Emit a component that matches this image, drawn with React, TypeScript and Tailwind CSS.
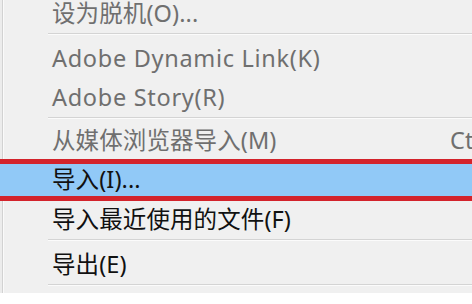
import React from "react";

const font = {
  fontFamily: '"Noto Sans", "Noto Sans CJK SC", sans-serif',
};

function Sep() {
  return (
    <div className="h-[6px] shrink-0 pl-[48px]">
      <div className="h-px bg-[#d4d4d4]" />
      <div className="h-px bg-[#fbfbfb]" />
    </div>
  );
}

function Item({
  label,
  muted,
  h,
  shortcut,
  wide,
}: {
  label: string;
  muted?: boolean;
  h: string;
  shortcut?: string;
  wide?: boolean;
}) {
  return (
    <div
      className={`flex shrink-0 items-center pl-[52px] text-[23.5px] leading-none whitespace-nowrap ${h} ${
        muted ? "text-[#6f6f6f]" : "text-[#111111]"
      } ${wide ? "tracking-[0.7px]" : "tracking-[0.1px]"}`}
    >
      <span className="flex-1">{label}</span>
      {shortcut && <span className="w-[22px] overflow-hidden text-[#6f6f6f]">{shortcut}</span>}
    </div>
  );
}

export default function App() {
  return (
    <div className="w-[472px] h-[304px] overflow-hidden bg-white" style={font}>
      <div className="h-[293px] overflow-hidden bg-[#f0f0f0] flex">
        <div className="w-[2px] shrink-0 bg-[#ececec]" />
        <div className="w-px shrink-0 bg-[#d2d2d2]" />
        <div className="w-px shrink-0 bg-[#fafafa]" />
        <div className="flex-1 -ml-[4px] flex flex-col -mt-[6px]">
          <Item label="设为脱机(O)..." muted h="h-[39px]" />
          <Sep />
          <Item label="Adobe Dynamic Link(K)" muted wide h="h-[39px]" />
          <Item label="Adobe Story(R)" muted wide h="h-[39px]" />
          <Sep />
          <Item label="从媒体浏览器导入(M)" muted h="h-[36px]" shortcut="Ctrl" />
          <div className="h-[42px] shrink-0 border-y-[5px] border-[#d3232b] bg-[#91c9f7] flex items-center pl-[52px] text-[23.5px] tracking-[0.1px] leading-none text-[#111111]">
            导入(I)...
          </div>
          <Item label="导入最近使用的文件(F)" h="h-[38px]" />
          <Sep />
          <Item label="导出(E)" h="h-[39px]" />
          <Sep />
          <Item label="" muted h="h-[39px]" />
        </div>
      </div>
    </div>
  );
}
